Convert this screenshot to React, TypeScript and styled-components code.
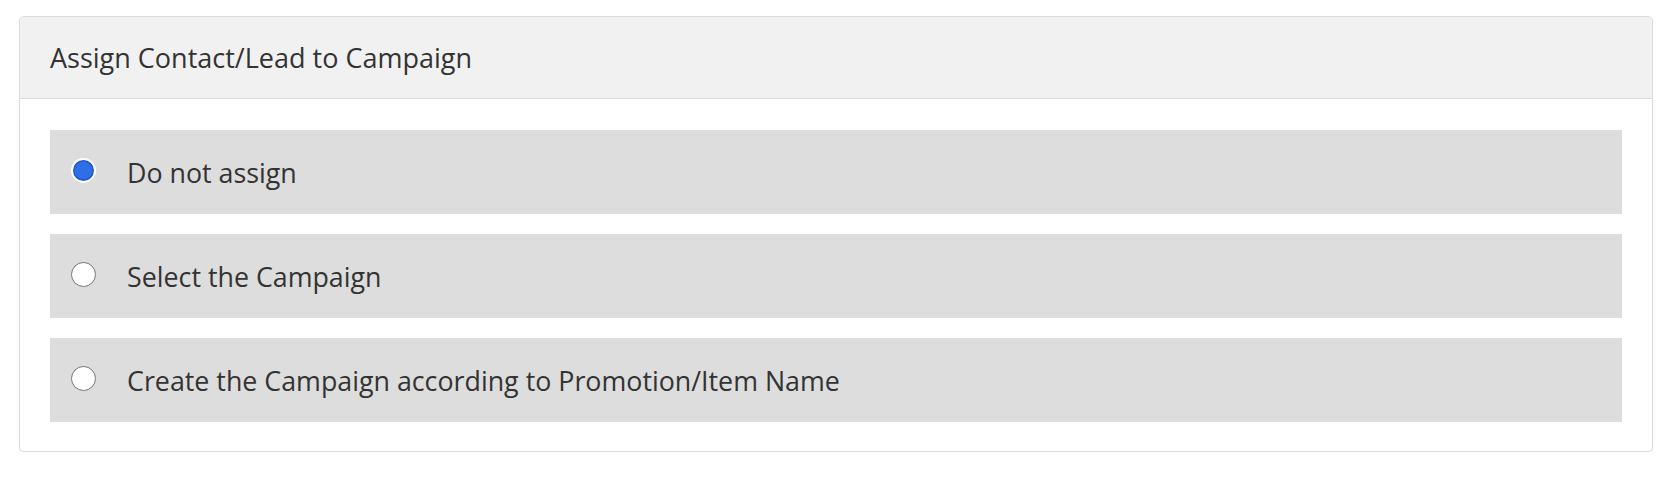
import React, { useState } from 'react'
import styled, { createGlobalStyle } from 'styled-components'

const GlobalStyle = createGlobalStyle`
  html, body {
    margin: 0;
    padding: 0;
    background: #fff;
  }
  body {
    font-family: "Open Sans", "Noto Sans", Arial, sans-serif;
    color: #333;
  }
`

const Page = styled.div`
  padding: 16px 21px 0 19px;
`

const Card = styled.div`
  border: 1px solid #dcdcdc;
  border-radius: 5px;
  background: #fff;
  box-shadow: 0 2px 3px rgba(0, 0, 0, 0.06);
  overflow: hidden;
`

const CardHeader = styled.div`
  height: 81px;
  display: flex;
  align-items: center;
  padding: 0 30px;
  background: #f1f1f1;
  border-bottom: 1px solid #dcdcdc;
  font-size: 27px;
  color: #333;
`

const CardBody = styled.div`
  display: flex;
  flex-direction: column;
  gap: 20px;
  padding: 31px 30px 29px 30px;
`

const OptionRow = styled.label`
  height: 84px;
  display: flex;
  align-items: center;
  padding-left: 21px;
  background: #dddddd;
  font-size: 26.8px;
  color: #333;
  cursor: pointer;
`

const RadioDot = styled.span<{ $checked: boolean }>`
  flex: none;
  width: 25px;
  height: 25px;
  box-sizing: border-box;
  border-radius: 50%;
  margin: -3px 31px 0 0;
  ${({ $checked }) =>
    $checked
      ? `
    background: #2f6fe6;
    border: 2px solid #fff;
    box-shadow: inset 0 0 0 1.5px #1f56c9;
  `
      : `
    background: #fff;
    border: 1.5px solid #767676;
  `}
`

const options = [
  'Do not assign',
  'Select the Campaign',
  'Create the Campaign according to Promotion/Item Name',
]

const App: React.FC = () => {
  const [selected, setSelected] = useState(0)

  return (
    <>
      <GlobalStyle />
      <Page>
        <Card>
          <CardHeader>Assign Contact/Lead to Campaign</CardHeader>
          <CardBody>
            {options.map((label, i) => (
              <OptionRow key={label} onClick={() => setSelected(i)}>
                <RadioDot $checked={selected === i} />
                {label}
              </OptionRow>
            ))}
          </CardBody>
        </Card>
      </Page>
    </>
  )
}

export default App
